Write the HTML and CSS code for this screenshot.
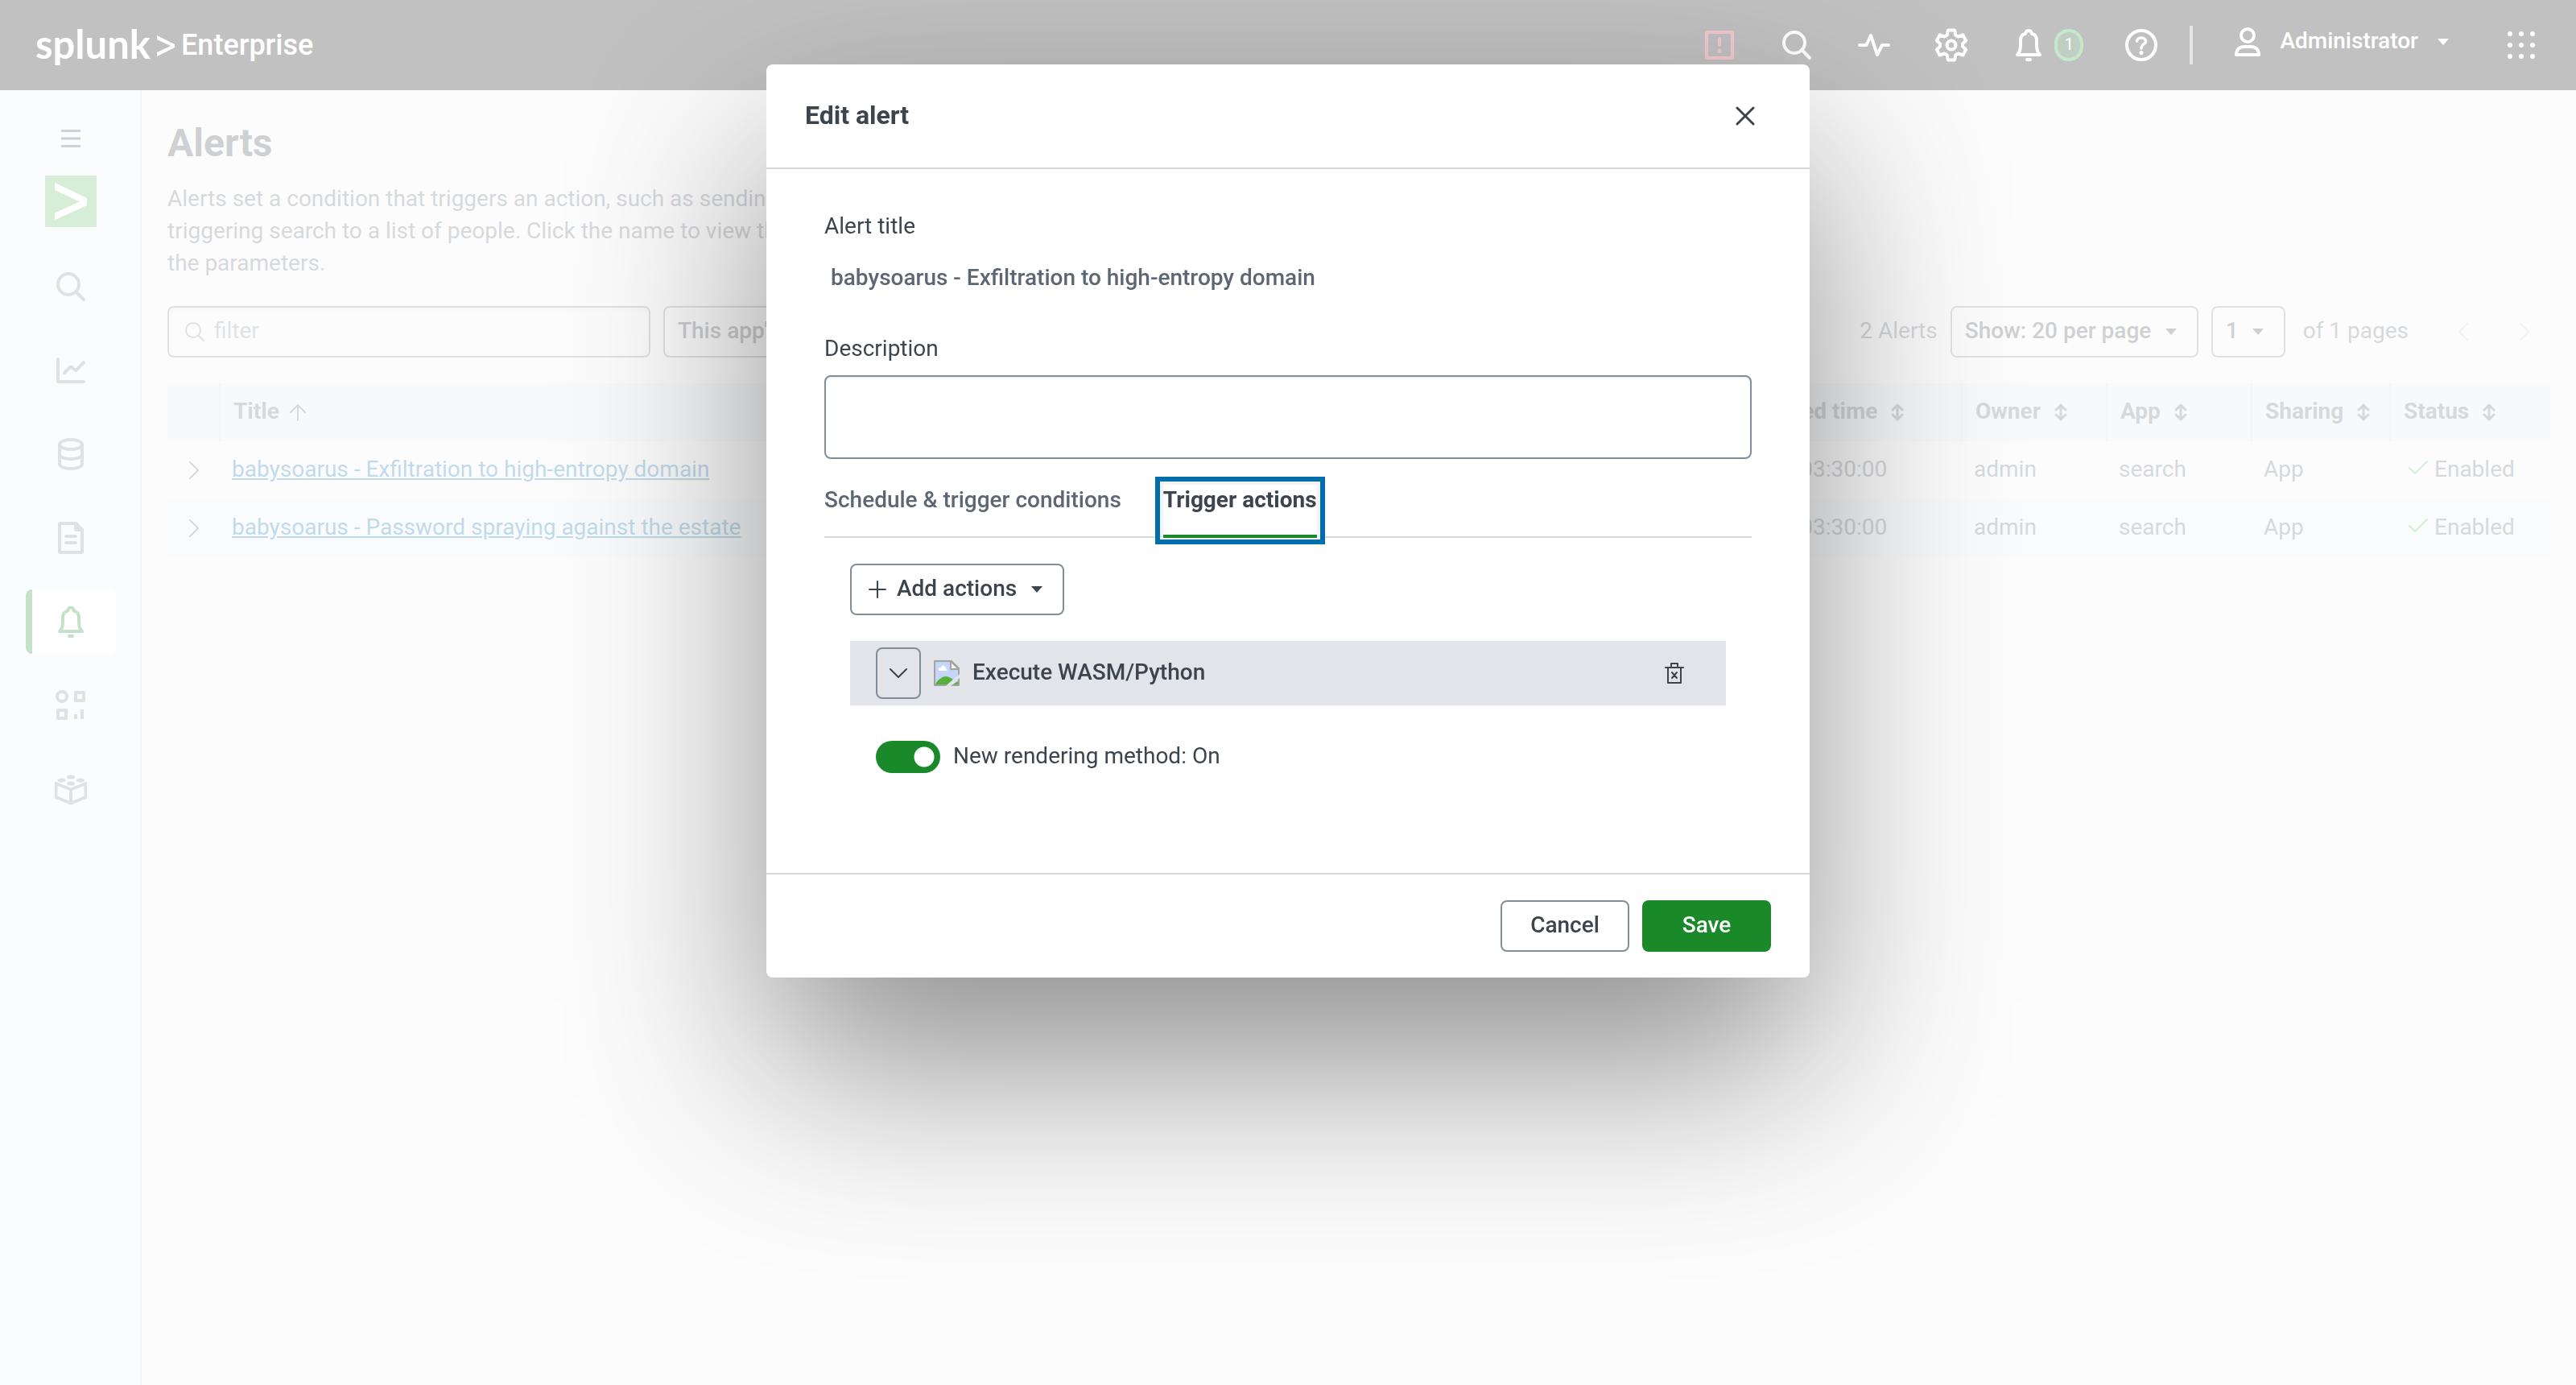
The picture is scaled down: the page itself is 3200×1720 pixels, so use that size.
FILE: index.html
```html
<!DOCTYPE html>
<html lang="en">
<head>
  <meta charset="utf-8">
  <title>Alerts</title>
  <link rel="stylesheet" href="styles.css">
</head>

<body>

  <header class="topbar">
    <a class="brand" href="#">
      <span class="brand-name">splunk</span>
      <svg class="brand-arrow" width="22" height="26" viewBox="0 0 22 26"><path d="M0 0L22 11V15L0 26V21L17 13L0 5Z" fill="#fff"/></svg>
      <span class="brand-product">Enterprise</span>
    </a>
    <nav class="topnav">
      <button class="icon-btn" aria-label="Messages">
        <svg class="danger" width="40" height="40" viewBox="0 0 40 40"><rect x="4" y="4" width="32" height="32" rx="2"/><path d="M20 12V20"/><circle cx="20" cy="27.500" r="2.500" fill="#d22c3c" stroke="none"/></svg>
      </button>
      <button class="icon-btn" aria-label="Search">
        <svg width="40" height="40" viewBox="0 0 40 40"><circle cx="17" cy="17" r="13"/><path d="M26.500 26L36 36"/></svg>
      </button>
      <button class="icon-btn" aria-label="Activity">
        <svg width="40" height="40" viewBox="0 0 40 40"><path d="M2 20H10.500L16 8L24 32L30 20H38"/></svg>
      </button>
      <button class="icon-btn" aria-label="Settings">
        <svg width="40" height="44" viewBox="0 0 40 44"><path d="M16 3.500H24L25.500 10L28.500 11.500L34.500 9.500L38 16.500L34 20.500V23.500L38 27.500L34.500 34.500L28.500 32.500L25.500 34L24 40.500H16L14.500 34L11.500 32.500L5.500 34.500L2 27.500L6 23.500V20.500L2 16.500L5.500 9.500L11.500 11.500L14.500 10Z"/><circle cx="20" cy="22" r="5.500"/></svg>
      </button>
      <button class="icon-btn alerts-btn" aria-label="Notifications">
        <svg width="32" height="40" viewBox="0 0 32 40"><path d="M2 32C5 29 6 24 6 20V14C6 9 9 6 12 6C13 0.700 19 0.700 20 6C23 6 26 9 26 14V20C26 24 27 29 30 32Z"/><path d="M14 38H18"/></svg>
        <span class="badge">1</span>
      </button>
      <button class="icon-btn" aria-label="Help">
        <svg width="40" height="40" viewBox="0 0 40 40"><circle cx="20" cy="20" r="18"/><path d="M14.500 15C15 9.500 25.500 9.500 25.500 15.500C25.500 19 20 19 20 24" stroke-width="3.500"/><circle cx="20" cy="29.500" r="2.500" fill="#fff" stroke="none"/></svg>
      </button>
      <span class="divider"></span>
      <button class="user-btn">
        <svg width="32" height="36" viewBox="0 0 32 36"><ellipse cx="16" cy="10" rx="8" ry="8"/><path d="M2 34C2 28 6 24 12 24H20C26 24 30 28 30 34Z"/></svg>
        <span>Administrator</span>
        <svg class="caret" width="14" height="8" viewBox="0 0 14 8"><path d="M0 0H14L7 8Z"/></svg>
      </button>
      <button class="icon-btn" aria-label="Apps">
        <svg class="dots" width="34" height="34" viewBox="0 0 34 34"><circle cx="3" cy="3" r="3"/><circle cx="17" cy="3" r="3"/><circle cx="31" cy="3" r="3"/><circle cx="3" cy="17" r="3"/><circle cx="17" cy="17" r="3"/><circle cx="31" cy="17" r="3"/><circle cx="3" cy="31" r="3"/><circle cx="17" cy="31" r="3"/><circle cx="31" cy="31" r="3"/></svg>
      </button>
    </nav>
  </header>

  <div class="layout">
    <aside class="sidebar">
      <button class="menu-btn" aria-label="Collapse navigation">
        <svg width="24" height="24" viewBox="0 0 24 24"><path d="M1 2.500H23M1 12H23M1 21.500H23"/></svg>
      </button>
      <a class="app-logo" href="#" aria-label="Search and Reporting">
        <svg width="64" height="64" viewBox="0 0 64 64"><path d="M12 9L52 28V37L12 55V46.500L43 32.500L12 18Z"/></svg>
      </a>
      <nav class="side-nav">
        <a href="#" aria-label="Search">
          <svg width="40" height="40" viewBox="0 0 40 40"><circle cx="17" cy="17" r="13"/><path d="M27 27L36 36"/></svg>
        </a>
        <a href="#" aria-label="Analytics">
          <svg width="40" height="40" viewBox="0 0 40 40"><path d="M4 6V34H36"/><path d="M12 23L19 16Q20 15 21 16L25 19.500Q26 20.500 27 19.500L36 10"/></svg>
        </a>
        <a href="#" aria-label="Datasets">
          <svg width="40" height="40" viewBox="0 0 40 40"><ellipse cx="20" cy="8" rx="14" ry="6"/><path d="M6 8V32C6 40 34 40 34 32V8M6 20C6 28 34 28 34 20"/></svg>
        </a>
        <a href="#" aria-label="Reports">
          <svg width="40" height="40" viewBox="0 0 40 40"><path d="M6 2H26L34 10V38H6Z"/><path d="M26 2V10H34" fill="#818d99"/><path d="M14 18H26M14 26H26"/></svg>
        </a>
        <a class="active" href="#" aria-label="Alerts">
          <svg width="40" height="40" viewBox="0 0 40 40"><path d="M6 32C9 29 10 25 10 21V14C10 10 13 7 16 7C17 1 23 1 24 7C27 7 30 10 30 14V21C30 25 31 29 34 32Z"/><path d="M18 38H22"/></svg>
        </a>
        <a href="#" aria-label="Dashboards">
          <svg width="40" height="40" viewBox="0 0 40 40"><circle cx="9" cy="9" r="6"/><path d="M26 4H36V14H26ZM4 26H14V36H4ZM26 31V37M34 25V37" stroke-linecap="butt"/></svg>
        </a>
        <a href="#" aria-label="Data inputs">
          <svg width="40" height="40" viewBox="0 0 40 40"><path d="M1.500 13V30L20 37.500L38.500 30V13L20 20.500ZM20 20.500V37"/><g fill="#818d99" stroke="none"><ellipse cx="20" cy="5" rx="5" ry="2.600"/><ellipse cx="8.500" cy="9" rx="5" ry="2.600"/><ellipse cx="32" cy="9" rx="5" ry="2.600"/><ellipse cx="20" cy="13" rx="5" ry="2.600"/></g></svg>
        </a>
      </nav>
    </aside>

    <main class="content">
      <h1>Alerts</h1>
      <p class="intro">Alerts set a condition that triggers an action, such as sending an email that contains the results of the triggering search to a list of people. Click the name to view the alert. Open the alert in Search to refine the parameters.</p>

      <div class="toolbar">
        <label class="filter">
          <svg width="24" height="24" viewBox="0 0 24 24"><circle cx="10" cy="10" r="9"/><path d="M17 17L23 23"/></svg>
          <input type="text" placeholder="filter" aria-label="filter">
        </label>
        <div class="select">
          <select aria-label="App"><option>This app's</option></select>
          <svg class="caret" width="14" height="8" viewBox="0 0 14 8"><path d="M0 0H14L7 8Z"/></svg>
        </div>
        <div class="pager">
          <span>2 Alerts</span>
          <div class="select">
            <select aria-label="Page size"><option>Show: 20 per page</option></select>
            <svg class="caret" width="14" height="8" viewBox="0 0 14 8"><path d="M0 0H14L7 8Z"/></svg>
          </div>
          <div class="select">
            <select aria-label="Page"><option>1</option></select>
            <svg class="caret" width="14" height="8" viewBox="0 0 14 8"><path d="M0 0H14L7 8Z"/></svg>
          </div>
          <span class="page-count">of 1 pages</span>
          <button class="page-btn" disabled aria-label="Previous"><svg width="12" height="22" viewBox="0 0 12 22"><path d="M11 1L1 11L11 21"/></svg></button>
          <button class="page-btn" disabled aria-label="Next"><svg width="12" height="22" viewBox="0 0 12 22"><path d="M1 1L11 11L1 21"/></svg></button>
        </div>
      </div>

      <table class="alerts">
        <colgroup>
          <col class="col-expand"><col><col class="col-actions"><col class="col-next"><col class="col-owner"><col class="col-app"><col class="col-sharing"><col class="col-status">
        </colgroup>
        <thead>
          <tr>
            <th></th>
            <th>Title <svg class="up" width="20" height="22" viewBox="0 0 20 22"><path d="M10 21V2M1 11L10 2L19 11"/></svg></th>
            <th>Actions</th>
            <th>Next scheduled time <svg class="sort" width="16" height="22" viewBox="0 0 16 22"><path d="M8 2V20M2 8L8 2L14 8M2 14L8 20L14 14"/></svg></th>
            <th>Owner <svg class="sort" width="16" height="22" viewBox="0 0 16 22"><path d="M8 2V20M2 8L8 2L14 8M2 14L8 20L14 14"/></svg></th>
            <th>App <svg class="sort" width="16" height="22" viewBox="0 0 16 22"><path d="M8 2V20M2 8L8 2L14 8M2 14L8 20L14 14"/></svg></th>
            <th>Sharing <svg class="sort" width="16" height="22" viewBox="0 0 16 22"><path d="M8 2V20M2 8L8 2L14 8M2 14L8 20L14 14"/></svg></th>
            <th>Status <svg class="sort" width="16" height="22" viewBox="0 0 16 22"><path d="M8 2V20M2 8L8 2L14 8M2 14L8 20L14 14"/></svg></th>
          </tr>
        </thead>
        <tbody>
          <tr>
            <td class="expand"><svg width="12" height="22" viewBox="0 0 12 22"><path d="M1 1L11 11L1 21"/></svg></td>
            <td><a href="#">babysoarus - Exfiltration to high-entropy domain</a></td>
            <td>Edit</td>
            <td class="next">2025-05-24 03:30:00</td>
            <td>admin</td>
            <td>search</td>
            <td>App</td>
            <td class="status"><svg width="24" height="18" viewBox="0 0 24 18"><path d="M1 9L8 16L23 1"/></svg>Enabled</td>
          </tr>
          <tr>
            <td class="expand"><svg width="12" height="22" viewBox="0 0 12 22"><path d="M1 1L11 11L1 21"/></svg></td>
            <td><a href="#">babysoarus - Password spraying against the estate</a></td>
            <td>Edit</td>
            <td class="next">2025-05-24 03:30:00</td>
            <td>admin</td>
            <td>search</td>
            <td>App</td>
            <td class="status"><svg width="24" height="18" viewBox="0 0 24 18"><path d="M1 9L8 16L23 1"/></svg>Enabled</td>
          </tr>
        </tbody>
      </table>
    </main>
  </div>

  <div class="overlay">
    <div class="modal" role="dialog" aria-labelledby="modalTitle">
      <div class="modal-header">
        <h2 id="modalTitle">Edit alert</h2>
        <button class="close-btn" aria-label="Close"><svg width="24" height="24" viewBox="0 0 24 24"><path d="M2 2L22 22M22 2L2 22"/></svg></button>
      </div>

      <div class="modal-body">
        <div class="label">Alert title</div>
        <div class="alert-name">babysoarus - Exfiltration to high-entropy domain</div>
        <label class="label" for="description">Description</label>
        <textarea id="description"></textarea>

        <div class="tabs" role="tablist">
          <button class="tab" role="tab">Schedule &amp; trigger conditions</button>
          <button class="tab selected" role="tab">Trigger actions</button>
        </div>

        <div class="actions">
          <button class="btn add-btn">
            <svg width="22" height="22" viewBox="0 0 22 22"><path d="M11 1V21M1 11H21"/></svg>
            <span>Add actions</span>
            <svg class="caret" width="14" height="8" viewBox="0 0 14 8"><path d="M0 0H14L7 8Z"/></svg>
          </button>

          <div class="action-row">
            <button class="toggle-row" aria-label="Collapse"><svg width="22" height="12" viewBox="0 0 22 12"><path d="M1 1L11 11L21 1"/></svg></button>
            <!-- missing app icon placeholder -->
            <svg class="app-icon" width="32" height="32" viewBox="0 0 32 32">
              <path d="M1 1H22L31 10V31H1Z" fill="#c5d7f8" stroke="#a3a3a3" stroke-width="2"/>
              <path d="M6 12Q5 9 9 9Q10 5 13 7Q16 8 15 11Q18 11 16 13H6Z" fill="#fff"/>
              <path d="M2 30Q4 25 9 22Q15 18 21 22L24 24L17 30Z" fill="#57b03c"/>
              <path d="M24 30L30 26V30Z" fill="#57b03c"/>
              <path d="M32 17V22L21 32H15Z" fill="#e1e4e9"/>
              <path d="M21 1V11H31Z" fill="#f4f4f4" stroke="#a3a3a3" stroke-width="2"/>
            </svg>
            <span class="action-name">Execute WASM/Python</span>
            <button class="trash-btn" aria-label="Remove"><svg width="24" height="28" viewBox="0 0 24 28"><path d="M1 7H23M4 7V26H20V7M8 7V2H16V7M9 13L15 20M15 13L9 20"/></svg></button>
          </div>

          <label class="switch">
            <input type="checkbox" checked>
            <span>New rendering method: On</span>
          </label>
        </div>
      </div>

      <div class="modal-footer">
        <button class="btn">Cancel</button>
        <button class="btn primary">Save</button>
      </div>
    </div>
  </div>

</body>
</html>
```
FILE: styles.css
```css
* {
  box-sizing: border-box;
}

body {
  margin: 0;
  min-height: 100vh;
  display: flex;
  flex-direction: column;
  font-family: Roboto, "Liberation Sans", sans-serif;
  font-size: 28px;
  line-height: 40px;
  color: #5c6773;
  background: #f3f3f3;
}

h1, h2, p {
  margin: 0;
}

button, select, input, textarea {
  font: inherit;
  color: inherit;
  margin: 0;
}

button {
  display: flex;
  align-items: center;
  justify-content: center;
  padding: 0;
  border: none;
  background: none;
  cursor: pointer;
}

svg {
  flex: none;
  fill: none;
  stroke: currentColor;
  stroke-width: 2;
  stroke-linecap: round;
  stroke-linejoin: round;
}

.caret {
  fill: currentColor;
  stroke: none;
}

/* top bar */

.topbar {
  display: flex;
  align-items: center;
  justify-content: space-between;
  height: 112px;
  padding: 0 47px 0 44px;
  background: #0a0a0a;
  color: #fff;
}

.brand {
  display: flex;
  align-items: center;
  color: #fff;
  text-decoration: none;
}

.brand-name {
  padding-bottom: 4px;
  font-family: Lato, sans-serif;
  font-size: 49px;
  font-weight: 700;
  line-height: 60px;
}

.brand-arrow {
  margin: 2px 8px 0 8px;
  stroke: none;
}

.brand-product {
  font-size: 36px;
  font-weight: 500;
}

.topnav {
  display: flex;
  align-items: center;
}

.icon-btn {
  margin-right: 56px;
}

.icon-btn:last-child {
  margin-right: 4px;
}

.icon-btn svg {
  stroke-width: 4;
}

.icon-btn .danger {
  color: #d22c3c;
}

.icon-btn .dots {
  fill: #fff;
  stroke: none;
}

.alerts-btn {
  gap: 16px;
  margin-right: 52px;
  margin-left: 4px;
}

.badge {
  width: 36px;
  height: 40px;
  border: 4px solid #1ba72f;
  border-radius: 18px;
  background: #083f10;
  font-size: 20px;
  line-height: 30px;
}

.divider {
  width: 4px;
  height: 48px;
  margin-left: -16px;
  margin-right: 52px;
  background: #999;
}

.user-btn {
  gap: 24px;
  margin-right: 73px;
  padding-bottom: 8px;
  font-weight: 500;
}

.user-btn span {
  padding-bottom: 2px;
}

.user-btn svg {
  stroke-width: 4;
}

/* side bar */

.layout {
  flex: 1;
  display: flex;
}

.sidebar {
  flex: none;
  width: 176px;
  display: flex;
  flex-direction: column;
  align-items: center;
  padding: 48px 0 0 2px;
  background: #edf3fa;
  border-right: 2px solid #cfd7df;
}

.menu-btn {
  color: #3c444d;
}

.menu-btn svg {
  stroke-width: 3;
}

.app-logo {
  height: 64px;
  margin: 34px 0;
  background: #5cbc5f;
}

.app-logo svg {
  fill: #fff;
  stroke: none;
}

.side-nav {
  display: flex;
  flex-direction: column;
  gap: 24px;
}

.side-nav a {
  display: flex;
  align-items: center;
  justify-content: center;
  width: 112px;
  height: 80px;
  border-radius: 8px;
  color: #818d99;
}

.side-nav a.active {
  color: #1a8929;
  background: linear-gradient(to right, #1a8929 8px, #fff 8px);
}

.side-nav svg {
  stroke-width: 4;
}

/* alerts page */

.content {
  flex: 1;
  padding: 38px 32px;
}

h1 {
  font-size: 48px;
  line-height: 56px;
  font-weight: 700;
  color: #3c444d;
}

.intro {
  max-width: 1270px;
  margin: 21px 0 33px;
}

.toolbar {
  display: flex;
  align-items: center;
  gap: 16px;
  margin-bottom: 32px;
}

.filter {
  display: flex;
  align-items: center;
  gap: 12px;
  width: 600px;
  height: 64px;
  padding: 0 20px;
  border: 2px solid #818d99;
  border-radius: 8px;
  box-shadow: inset 0 2px 4px rgba(0, 0, 0, 0.1);
  color: #818d99;
}

.filter input {
  flex: 1;
  border: none;
  padding: 0 0 2px;
  outline: none;
  background: none;
}

.filter input::placeholder {
  color: #818d99;
  opacity: 1;
}

.select {
  display: grid;
  align-items: center;
  color: #3c444d;
}

.select select,
.select .caret {
  grid-area: 1 / 1;
}

.select select {
  appearance: none;
  height: 64px;
  padding: 0 56px 2px 16px;
  border: 2px solid #818d99;
  border-radius: 8px;
  background: none;
  font-weight: 500;
}

.select .caret {
  justify-self: end;
  margin-right: 27px;
}

.pager {
  display: flex;
  align-items: center;
  gap: 16px;
  margin-left: auto;
}

.pager span {
  padding-bottom: 2px;
}

.page-count {
  margin-left: 6px;
  margin-right: 20px;
}

.page-btn {
  width: 64px;
  height: 64px;
  color: #c3cbd4;
}

.page-btn:last-child {
  margin-left: -4px;
}

.alerts {
  width: 100%;
  table-layout: fixed;
  border-collapse: separate;
  border-spacing: 0;
}

.col-expand {
  width: 64px;
}

.col-actions {
  width: 300px;
}

.col-next {
  width: 380px;
}

.col-owner, .col-app {
  width: 180px;
}

.col-sharing {
  width: 172px;
}

.col-status {
  width: 200px;
}

.alerts th, .alerts td {
  height: 72px;
  padding: 0 16px 2px;
  text-align: left;
  white-space: nowrap;
}

.alerts th {
  font-weight: 700;
  background: #e1e7ee;
  border-left: 2px solid #cfd7df;
}

.alerts th:first-child {
  border-left: none;
}

.alerts tbody tr:nth-child(even) {
  background: #e9eff4;
}

.alerts svg {
  vertical-align: -3px;
}

.alerts th svg {
  margin-left: 6px;
}

.alerts .sort {
  margin-left: 10px;
  stroke-width: 3;
}

.alerts a {
  color: #006eaa;
}

.alerts .expand {
  padding-left: 27px;
}

.alerts .next {
  padding-left: 32px;
}

.alerts .status svg {
  margin: 0 8px;
  vertical-align: 2px;
  color: #5cbc5f;
}

/* modal */

.overlay {
  position: fixed;
  inset: 0;
  display: flex;
  align-items: flex-start;
  justify-content: center;
  padding: 80px 32px;
  background: rgba(255, 255, 255, 0.75);
  overflow: hidden;
}

.modal {
  width: 100%;
  max-width: 1296px;
  border-radius: 8px;
  background: #fff;
  color: #3c444d;
  box-shadow: 0 112px 240px rgba(0, 0, 0, 0.43);
}

.modal-header {
  display: flex;
  align-items: center;
  justify-content: space-between;
  height: 130px;
  padding: 0 68px 0 48px;
  border-bottom: 2px solid #d5d6d7;
}

h2 {
  padding-bottom: 2px;
  font-size: 32px;
  line-height: 40px;
  font-weight: 700;
}

.close-btn svg {
  stroke-width: 3;
}

.modal-body {
  padding: 51px 72px 124px;
}

.label {
  display: block;
}

.alert-name {
  margin: 24px 8px 48px;
  font-weight: 500;
  color: #5c6773;
}

textarea {
  display: block;
  width: 100%;
  height: 104px;
  margin-top: 13px;
  padding: 12px 16px;
  border: 2px solid #818d99;
  border-radius: 8px;
  resize: none;
  box-shadow: inset 0 2px 2px rgba(0, 0, 0, 0.06);
}

.tabs {
  display: flex;
  gap: 52px;
  margin-top: 32px;
  border-bottom: 2px solid #d5dae2;
}

.tab {
  position: relative;
  height: 64px;
  align-items: flex-start;
  line-height: 38px;
  font-weight: 500;
  color: #5c6773;
}

.tab.selected {
  font-weight: 700;
  color: #3c444d;
  background: #fff;
  box-shadow: 0 0 0 4px #f2f4f6, 0 0 0 10px #006eaa;
}

.tab.selected::after {
  content: "";
  position: absolute;
  left: 0;
  right: 0;
  bottom: -2px;
  height: 4px;
  background: #1a8929;
}

.actions {
  padding: 32px 32px 0;
}

.btn {
  min-width: 160px;
  height: 64px;
  padding-bottom: 2px;
  border: 2px solid #818d99;
  border-radius: 8px;
  font-weight: 500;
}

.add-btn {
  padding: 0 25px 0 21px;
}

.add-btn span {
  margin: 0 18px 0 13px;
  padding-bottom: 2px;
}

.action-row {
  display: flex;
  align-items: center;
  gap: 16px;
  height: 80px;
  margin: 32px 0 44px;
  padding: 0 52px 0 32px;
  background: #e1e4e9;
}

.toggle-row {
  width: 56px;
  height: 64px;
  border: 2px solid #818d99;
  border-radius: 8px;
}

.app-icon {
  stroke: none;
}

.action-name {
  flex: 1;
  padding-bottom: 2px;
  font-weight: 500;
}

.switch {
  display: flex;
  align-items: center;
  gap: 16px;
  padding-left: 32px;
}

.switch span {
  line-height: 38px;
  padding-bottom: 2px;
}

.switch input {
  appearance: none;
  width: 80px;
  height: 40px;
  border-radius: 20px;
  background: radial-gradient(circle at 60px 20px, #fff 12px, #1a8929 13px);
}

.modal-footer {
  display: flex;
  justify-content: flex-end;
  gap: 16px;
  padding: 32px 48px;
  border-top: 2px solid #d5d6d7;
}

.btn.primary {
  border-color: #1a8929;
  background: #1a8929;
  color: #fff;
}
```
